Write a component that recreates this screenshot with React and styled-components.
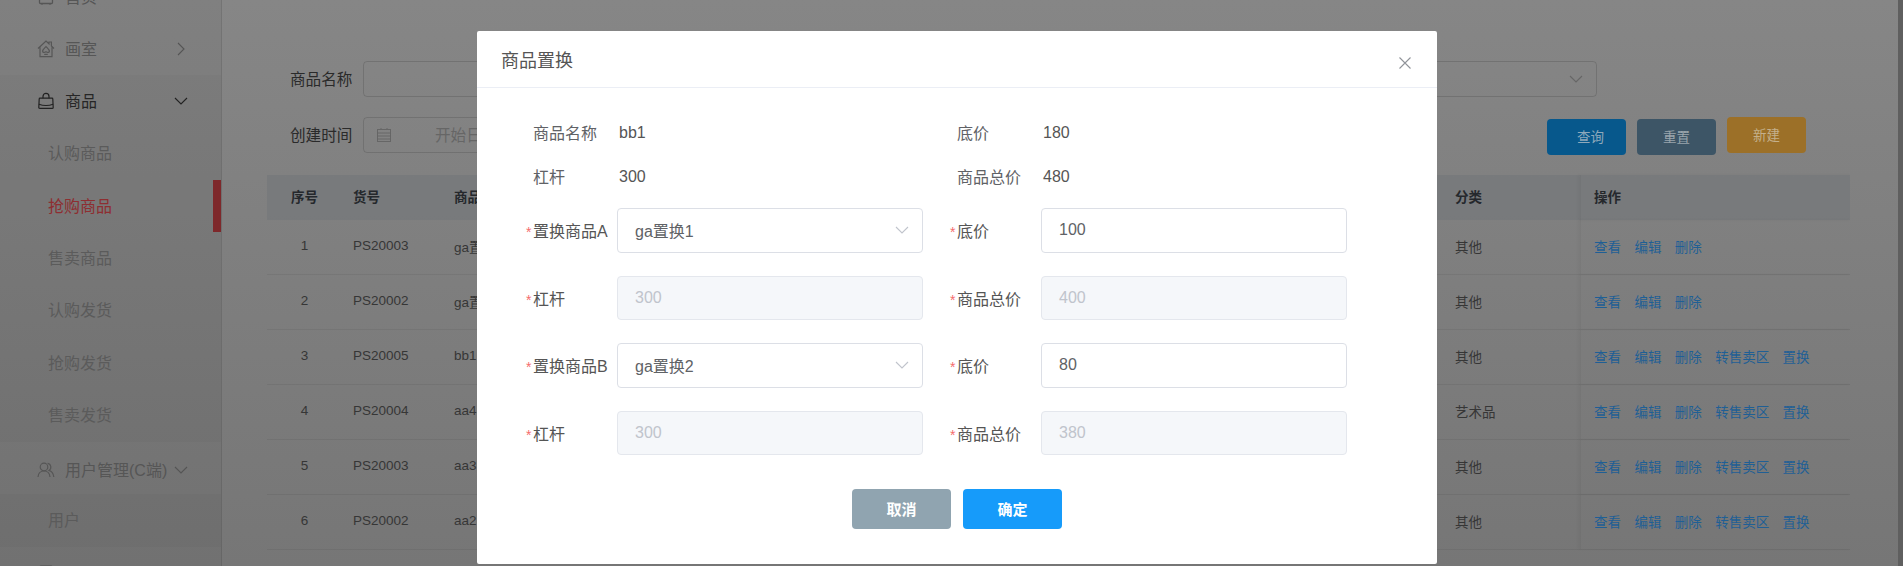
import styled, { createGlobalStyle } from 'styled-components'

const GlobalStyle = createGlobalStyle`
  html, body, #root { margin: 0; padding: 0; height: 100%; }
  body {
    overflow: hidden;
    font-family: "Liberation Sans", "Noto Sans CJK SC", sans-serif;
  }
  * { box-sizing: border-box; }
`

const Page = styled.div`
  display: flex;
  width: 100%;
  height: 100vh;
  overflow: hidden;
  background: linear-gradient(180deg, #868686 0%, #767676 100%);
`

const Sidebar = styled.aside`
  position: relative;
  flex: none;
  width: 222px;
  border-right: 1px solid rgba(0, 0, 0, 0.09);
  background: rgba(0, 0, 0, 0.04);
  overflow: hidden;
`

const Menu = styled.nav`
  margin-top: -29.6px;
`

const MenuItem = styled.div`
  display: flex;
  align-items: center;
  height: 52.4px;
  padding: ${props => props.$drop || '0'} 33px 0 37px;
  font-size: 16px;
  color: ${props => (props.$open ? '#262626' : '#565656')};
  background: ${props => (props.$open ? 'rgba(0,0,0,0.025)' : 'transparent')};
`

const MenuIcon = styled.span`
  display: flex;
  align-items: center;
  justify-content: center;
  width: 18px;
  height: 18px;
  margin-right: 10px;
`

const MenuLabel = styled.span`
  flex: 1;
  padding-bottom: 2px;
  white-space: nowrap;
`

const SubItem = styled.div`
  position: relative;
  display: flex;
  align-items: center;
  height: 52.4px;
  padding: 0 0 3px 48px;
  font-size: 16px;
  color: ${props => (props.$active ? '#8e2e31' : '#5b5b5b')};
  background: rgba(0, 0, 0, 0.025);
`

const ActiveBar = styled.span`
  position: absolute;
  top: 0;
  right: 0;
  width: 8px;
  height: 100%;
  background: #7e282b;
`

const Main = styled.main`
  flex: 1;
  min-width: 0;
  padding: 61px 48px 0 44px;
`

const FilterRow = styled.div`
  display: grid;
  grid-template-columns: repeat(3, 1fr);
  gap: 20px;
  padding: 0 253px 0 24px;
  height: 36px;
`

const ActionRow = styled.div`
  display: flex;
  align-items: flex-start;
  height: 36px;
  margin: 20px 0 22px;
  padding: 0 44px 0 24px;
`

const FilterField = styled.label`
  display: flex;
  align-items: center;
  font-size: 15.6px;
  color: #2a2a2a;
  white-space: nowrap;
`

const FilterLabel = styled.span`
  flex: none;
  width: 73px;
  padding-bottom: 3px;
`

const FilterBox = styled.div`
  display: flex;
  align-items: center;
  justify-content: flex-end;
  flex: 1;
  height: 36px;
  padding: 0 13px;
  border: 1px solid rgba(0, 0, 0, 0.13);
  border-radius: 4px;
`

const DateBox = styled(FilterBox)`
  flex: none;
  width: 500px;
  justify-content: flex-start;
  padding-left: 12px;
`

const DatePlaceholder = styled.span`
  margin-left: 43px;
  padding-bottom: 3px;
  font-size: 15.6px;
  color: #666;
`

const ActionGroup = styled.div`
  display: flex;
  gap: 11px;
  margin-left: auto;
`

const ActionButton = styled.button`
  width: 79px;
  height: 36px;
  margin-top: ${props => (props.$raised ? '0' : '2px')};
  padding: 0 0 2px ${props => props.$shift || '0'};
  border: 0;
  border-radius: 4px;
  font-family: inherit;
  font-size: 13.5px;
  color: ${props => props.$text};
  background: ${props => props.$bg};
`

const Table = styled.div`
  margin-left: 1px;
  font-size: 13.5px;
  color: #363636;
`

const TableRow = styled.div`
  display: grid;
  grid-template-columns: 75px 101px 1001px 136px 271px;
  align-items: center;
  height: ${props => (props.$head ? '45px' : '55px')};
  font-weight: ${props => (props.$head ? 700 : 400)};
  color: ${props => (props.$head ? '#25282c' : '#363636')};
  background: ${props => (props.$head ? 'rgba(50, 65, 85, 0.1)' : 'transparent')};
  border-bottom: ${props => (props.$head ? '0' : '1px solid rgba(0, 0, 0, 0.06)')};
`

const IndexCell = styled.div`
  padding-bottom: 3px;
  text-align: center;
  white-space: nowrap;
`

const Cell = styled.div`
  padding: 0 0 3px 11px;
  white-space: nowrap;
`

const ActionCell = styled.div`
  display: flex;
  align-items: center;
  align-self: stretch;
  gap: 13.4px;
  padding: 0 0 3px 13px;
  border-left: 1px solid rgba(0, 0, 0, 0.04);
  box-shadow: -2px 0 3px rgba(0, 0, 0, 0.04);
  white-space: nowrap;
`

const TableLink = styled.span`
  color: #1f5f95;
`

const Scrollbar = styled.div`
  flex: none;
  width: 5px;
  background: #5f5f5f;
`

const Modal = styled.section`
  position: fixed;
  top: 31px;
  left: 477px;
  width: 960px;
  height: 533px;
  background: #fff;
  border-radius: 2px;
`

const ModalHeader = styled.header`
  display: flex;
  align-items: center;
  justify-content: space-between;
  height: 57px;
  padding: 0 26px 0 24px;
  border-bottom: 1px solid #ebeef5;
`

const ModalTitle = styled.h2`
  margin: 0;
  font-size: 18px;
  font-weight: 400;
  color: #555;
`

const CloseButton = styled.button`
  display: flex;
  margin-top: 7px;
  padding: 0;
  border: 0;
  background: transparent;
`

const ModalBody = styled.div`
  padding: 22px 0 0 49px;
`

const InfoGrid = styled.div`
  display: grid;
  grid-template-columns: repeat(2, 397px);
  grid-auto-rows: 44px;
  column-gap: 27px;
  margin-bottom: 10px;
`

const InfoItem = styled.div`
  display: grid;
  grid-template-columns: 86px 1fr;
  align-items: center;
  padding-left: 7px;
  font-size: 16px;
  color: #606266;
`

const InfoValue = styled.span`
  padding-top: 1px;
  color: #555;
`

const FormGrid = styled.div`
  display: grid;
  grid-template-columns: repeat(2, 397px);
  grid-auto-rows: 44.6px;
  column-gap: 27px;
  row-gap: 23px;
`

const FormItem = styled.div`
  display: grid;
  grid-template-columns: 91px 306px;
  align-items: center;
`

const FormLabel = styled.label`
  font-size: 16px;
  color: #555;
  white-space: nowrap;
`

const Star = styled.span`
  display: inline-block;
  width: 7px;
  font-size: 14px;
  color: #f56c6c;
`

const Field = styled.div`
  display: flex;
  align-items: center;
  justify-content: space-between;
  height: 100%;
  padding: 0 13px 0 17px;
  border: 1px solid ${props => (props.$disabled ? '#e4e7ed' : '#dcdfe6')};
  border-radius: 4px;
  font-size: 16px;
  color: ${props => (props.$disabled ? '#c0c4cc' : '#606266')};
  background: ${props => (props.$disabled ? '#f5f7fa' : '#fff')};
`

const ModalFooter = styled.footer`
  display: flex;
  justify-content: center;
  gap: 12px;
  margin-top: 34px;
`

const FooterButton = styled.button`
  width: 99px;
  height: 40px;
  padding: 0 0 2px;
  border: 0;
  border-radius: 4px;
  font-family: inherit;
  font-size: 15px;
  font-weight: 700;
  color: #fff;
  background: ${props => props.$bg};
`

const Chevron = ({ dir = 'down', color = '#c0c4cc', size = 14 }) => (
  <svg width={size} height={size} viewBox="0 0 14 14" fill="none" stroke={color} strokeWidth="1.1">
    <polyline points={dir === 'down' ? '1,4 7,10 13,4' : '4,1 10,7 4,13'} />
  </svg>
)

const PageIcon = ({ color = '#565656' }) => (
  <svg width="16" height="16" viewBox="0 0 16 16" fill="none" stroke={color} strokeWidth="1.3">
    <rect x="1.5" y="1.5" width="13" height="13" rx="1" />
    <path d="M4 14.5v1.2M12 14.5v1.2" />
  </svg>
)

const HomeIcon = () => (
  <svg width="18" height="18" viewBox="0 0 18 18" fill="none" stroke="#565656" strokeWidth="1.2">
    <path d="M1 8.5 9 1l3 2.8V2h2.4v4L17 8.5M3 7.2V16.6h12V7.2" />
    <path d="M9 6.6c1.6 1.8 3.4 3 3.4 4.6 0 1.2-1.6 1.7-3.4.6-1.8 1.1-3.4.6-3.4-.6 0-1.6 1.8-2.8 3.4-4.6Z" />
    <path d="M7.2 14.4h3.6" />
  </svg>
)

const BagIcon = () => (
  <svg width="16" height="18" viewBox="0 0 16 18" fill="none" stroke="#222" strokeWidth="1.2">
    <path d="M2 6.2h12c.5 0 .8.3.8.8l.4 8.4c0 .6-.4 1-1 1H1.8c-.6 0-1-.4-1-1L1.2 7c0-.5.3-.8.8-.8Z" />
    <path d="M5 6.2V4.4a3 3 0 0 1 6 0v1.8" />
    <path d="M1 12.2c2.2.9 4.6 1.3 7 1.3s4.8-.4 7-1.3" />
  </svg>
)

const UsersIcon = () => (
  <svg width="18" height="18" viewBox="0 0 18 18" fill="none" stroke="#565656" strokeWidth="1.2">
    <circle cx="7" cy="6" r="3.8" />
    <path d="M1 16c.3-3.6 2.6-6 6-6s5.7 2.4 6 6" />
    <path d="M10.6 2.4a3.8 3.8 0 0 1 1.4 7c2.6.8 4.4 3.2 4.8 6.6" />
  </svg>
)

const CalendarIcon = () => (
  <svg width="16" height="16" viewBox="0 0 16 16" fill="none" stroke="#666" strokeWidth="1">
    <rect x="1.5" y="2.5" width="13" height="12" />
    <path d="M1.5 6h13M1.5 9h13M1.5 12h13M5 1v2M11 1v2" />
  </svg>
)

const CloseIcon = () => (
  <svg width="12" height="12" viewBox="0 0 12 12" stroke="#909399" strokeWidth="1.1">
    <path d="M.5.5l11 11M11.5.5l-11 11" />
  </svg>
)

const rows = [
  { no: 1, code: 'PS20003', name: 'ga置换2', type: '其他', extra: false },
  { no: 2, code: 'PS20002', name: 'ga置换1', type: '其他', extra: false },
  { no: 3, code: 'PS20005', name: 'bb1', type: '其他', extra: true },
  { no: 4, code: 'PS20004', name: 'aa4', type: '艺术品', extra: true },
  { no: 5, code: 'PS20003', name: 'aa3', type: '其他', extra: true },
  { no: 6, code: 'PS20002', name: 'aa2', type: '其他', extra: true },
]

const subMenu = ['认购商品', '抢购商品', '售卖商品', '认购发货', '抢购发货', '售卖发货']

const App = () => {
  return (
    <Page>
      <GlobalStyle />
      <Sidebar>
        <Menu>
          <MenuItem>
            <MenuIcon><PageIcon /></MenuIcon>
            <MenuLabel>首页</MenuLabel>
          </MenuItem>
          <MenuItem>
            <MenuIcon><HomeIcon /></MenuIcon>
            <MenuLabel>画室</MenuLabel>
            <Chevron dir="right" color="#555" />
          </MenuItem>
          <MenuItem $open>
            <MenuIcon><BagIcon /></MenuIcon>
            <MenuLabel>商品</MenuLabel>
            <Chevron color="#222" />
          </MenuItem>
          {subMenu.map((item, i) => (
            <SubItem key={item} $active={i === 1}>
              {item}
              {i === 1 && <ActiveBar />}
            </SubItem>
          ))}
          <MenuItem $drop="3px">
            <MenuIcon><UsersIcon /></MenuIcon>
            <MenuLabel>用户管理(C端)</MenuLabel>
            <Chevron color="#555" />
          </MenuItem>
          <SubItem>用户</SubItem>
          <MenuItem>
            <MenuIcon><PageIcon color="#333" /></MenuIcon>
          </MenuItem>
        </Menu>
      </Sidebar>

      <Main>
        <FilterRow>
          <FilterField>
            <FilterLabel>商品名称</FilterLabel>
            <FilterBox />
          </FilterField>
          <FilterField>
            <FilterLabel>货号</FilterLabel>
            <FilterBox />
          </FilterField>
          <FilterField>
            <FilterLabel>分类</FilterLabel>
            <FilterBox><Chevron color="#666" /></FilterBox>
          </FilterField>
        </FilterRow>
        <ActionRow>
          <FilterField>
            <FilterLabel>创建时间</FilterLabel>
            <DateBox>
              <CalendarIcon />
              <DatePlaceholder>开始日期</DatePlaceholder>
            </DateBox>
          </FilterField>
          <ActionGroup>
            <ActionButton $bg="#07588c" $text="#8fa9bb" $shift="8px">查询</ActionButton>
            <ActionButton $bg="#3d5566" $text="#9aa5ad">重置</ActionButton>
            <ActionButton $bg="#9c7028" $text="#c4b08c" $raised>新建</ActionButton>
          </ActionGroup>
        </ActionRow>

        <Table>
          <TableRow $head>
            <IndexCell>序号</IndexCell>
            <Cell>货号</Cell>
            <Cell>商品名称</Cell>
            <Cell>分类</Cell>
            <ActionCell>操作</ActionCell>
          </TableRow>
          {rows.map(row => (
            <TableRow key={row.no}>
              <IndexCell>{row.no}</IndexCell>
              <Cell>{row.code}</Cell>
              <Cell>{row.name}</Cell>
              <Cell>{row.type}</Cell>
              <ActionCell>
                <TableLink>查看</TableLink>
                <TableLink>编辑</TableLink>
                <TableLink>删除</TableLink>
                {row.extra && <TableLink>转售卖区</TableLink>}
                {row.extra && <TableLink>置换</TableLink>}
              </ActionCell>
            </TableRow>
          ))}
        </Table>
      </Main>
      <Scrollbar />

      <Modal>
        <ModalHeader>
          <ModalTitle>商品置换</ModalTitle>
          <CloseButton><CloseIcon /></CloseButton>
        </ModalHeader>
        <ModalBody>
          <InfoGrid>
            <InfoItem>商品名称<InfoValue>bb1</InfoValue></InfoItem>
            <InfoItem>底价<InfoValue>180</InfoValue></InfoItem>
            <InfoItem>杠杆<InfoValue>300</InfoValue></InfoItem>
            <InfoItem>商品总价<InfoValue>480</InfoValue></InfoItem>
          </InfoGrid>
          <FormGrid>
            <FormItem>
              <FormLabel><Star>*</Star>置换商品A</FormLabel>
              <Field>ga置换1<Chevron /></Field>
            </FormItem>
            <FormItem>
              <FormLabel><Star>*</Star>底价</FormLabel>
              <Field>100</Field>
            </FormItem>
            <FormItem>
              <FormLabel><Star>*</Star>杠杆</FormLabel>
              <Field $disabled>300</Field>
            </FormItem>
            <FormItem>
              <FormLabel><Star>*</Star>商品总价</FormLabel>
              <Field $disabled>400</Field>
            </FormItem>
            <FormItem>
              <FormLabel><Star>*</Star>置换商品B</FormLabel>
              <Field>ga置换2<Chevron /></Field>
            </FormItem>
            <FormItem>
              <FormLabel><Star>*</Star>底价</FormLabel>
              <Field>80</Field>
            </FormItem>
            <FormItem>
              <FormLabel><Star>*</Star>杠杆</FormLabel>
              <Field $disabled>300</Field>
            </FormItem>
            <FormItem>
              <FormLabel><Star>*</Star>商品总价</FormLabel>
              <Field $disabled>380</Field>
            </FormItem>
          </FormGrid>
        </ModalBody>
        <ModalFooter>
          <FooterButton $bg="#90a4b0">取消</FooterButton>
          <FooterButton $bg="#169bfa">确定</FooterButton>
        </ModalFooter>
      </Modal>
    </Page>
  )
}

export default App
